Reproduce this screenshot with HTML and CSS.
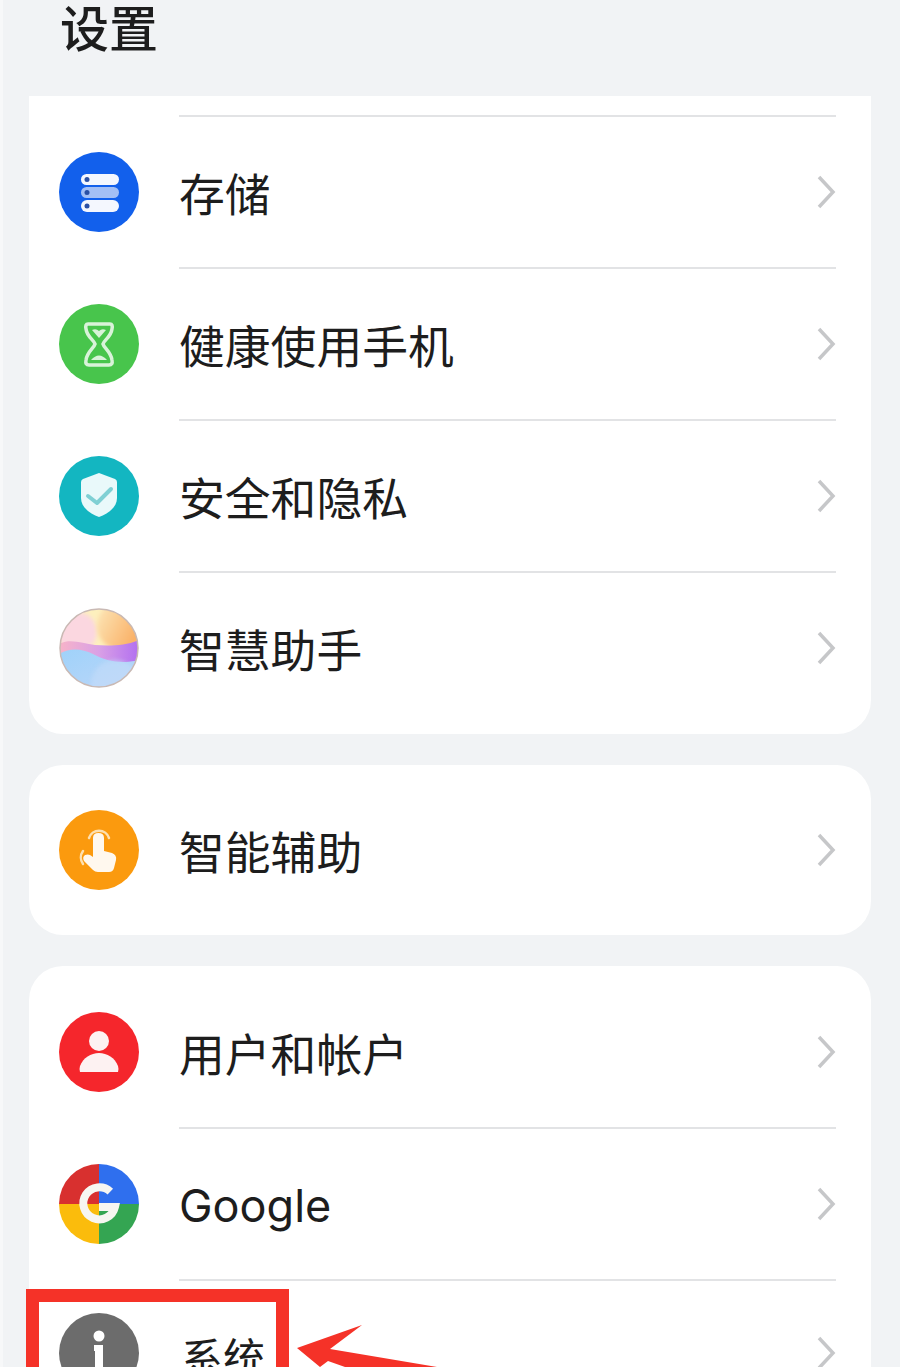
FILE: index.html
```html
<!DOCTYPE html>
<html lang="zh-CN">
<head>
<meta charset="utf-8">
<title>设置</title>
<link rel="stylesheet" href="styles.css">
</head>
<body>
<div class="screen">
  <header class="header"><h1 class="title">设置</h1></header>

  <section class="card card-scrolled">
    <div class="row row-clipped"></div>
    <div class="row">
      <svg class="icon" viewBox="0 0 80 80"><circle cx="40" cy="40" r="40" fill="#1260ec"/><rect x="22" y="22" width="38" height="11" rx="5.5" fill="#f4f7fe"/><rect x="22" y="35" width="38" height="11" rx="5.5" fill="#a3bff5"/><rect x="22" y="48" width="38" height="12" rx="6" fill="#f4f7fe"/><circle cx="28" cy="27.500" r="2.500" fill="#2a50a5"/><circle cx="28" cy="40.500" r="2.500" fill="#2a50a5"/><circle cx="28" cy="54" r="2.500" fill="#2a50a5"/></svg>
      <span class="label">存储</span>
      <svg class="chev" viewBox="0 0 20 36"><path d="M3 3 L17 18 L3 33"/></svg>
    </div>
    <div class="row">
      <svg class="icon" viewBox="0 0 80 80"><circle cx="40" cy="40" r="40" fill="#48c54c"/><path d="M29 20 H51 Q54 20 53 25 C52 33 45 36 44 40 C45 44 52 48 53 56 Q54 61 50 61 H30 Q26 61 27 56 C28 48 35 44 36 40 C35 36 28 33 27 25 Q26 20 29 20 Z" fill="none" stroke="#d9f3d9" stroke-width="3.500"/><path d="M33 26 Q37 24 40 27 Q43 24 47 26 L40 34 Z" fill="#d9f3d9"/><path d="M32 56 Q40 47 48 56 Z" fill="#d9f3d9"/></svg>
      <span class="label">健康使用手机</span>
      <svg class="chev" viewBox="0 0 20 36"><path d="M3 3 L17 18 L3 33"/></svg>
    </div>
    <div class="row">
      <svg class="icon" viewBox="0 0 80 80"><circle cx="40" cy="40" r="40" fill="#13b6c1"/><path d="M40 17 L56 23 Q58 24 58 26 V42 C58 52 48 58 40 61 C32 58 22 52 22 42 V26 Q22 24 24 23 Z" fill="#e9f9fa"/><path d="M29 40 L38 47 L52 33" fill="none" stroke="#7fd0d4" stroke-width="4" stroke-linecap="round" stroke-linejoin="round"/></svg>
      <span class="label">安全和隐私</span>
      <svg class="chev" viewBox="0 0 20 36"><path d="M3 3 L17 18 L3 33"/></svg>
    </div>
    <div class="row">
      <svg class="icon" viewBox="0 0 80 80">
        <defs>
          <clipPath id="orb"><circle cx="40" cy="40" r="39"/></clipPath>
          <filter id="soft" x="-20%" y="-20%" width="140%" height="140%"><feGaussianBlur stdDeviation="2"/></filter>
          <linearGradient id="orbBlob" x1="0" y1="0" x2="1" y2="0.500"><stop offset="0" stop-color="#fde9bc"/><stop offset="1" stop-color="#f9ad62"/></linearGradient>
          <linearGradient id="orbMid" x1="0" y1="0" x2="1" y2="0"><stop offset="0" stop-color="#f8b4c8"/><stop offset="0.500" stop-color="#d9a0e6"/><stop offset="1" stop-color="#b26ff0"/></linearGradient>
          <linearGradient id="orbLow" x1="0" y1="0" x2="1" y2="1"><stop offset="0" stop-color="#9fd2fa"/><stop offset="1" stop-color="#bcd6f8"/></linearGradient>
        </defs>
        <g clip-path="url(#orb)">
          <rect width="80" height="80" fill="#fdf0bd"/>
          <circle cx="18" cy="24" r="20" fill="#fbd7e0" filter="url(#soft)"/>
          <circle cx="62" cy="18" r="24" fill="url(#orbBlob)" filter="url(#soft)"/>
          <path d="M0 36 C12 30 24 36 36 37 C50 38 66 38 80 32 V62 H0 Z" fill="url(#orbMid)"/>
          <path d="M0 46 C10 40 22 40 34 46 C48 54 64 56 80 52 V80 H0 Z" fill="url(#orbLow)"/>
          <circle cx="56" cy="76" r="24" fill="#c5dcf9" opacity="0.600" filter="url(#soft)"/>
        </g>
        <circle cx="40" cy="40" r="39" fill="none" stroke="#c9b9b4" stroke-width="1.500"/>
      </svg>
      <span class="label">智慧助手</span>
      <svg class="chev" viewBox="0 0 20 36"><path d="M3 3 L17 18 L3 33"/></svg>
    </div>
  </section>

  <section class="card">
    <div class="row">
      <svg class="icon" viewBox="0 0 80 80"><circle cx="40" cy="40" r="40" fill="#fb9a0e"/><path d="M34 28 Q34 23 39.500 23 Q45 23 45 28 V41 L53 43 Q58 45 57 50 L55 58 Q54 62 50 62 H39 Q36 62 34 60 L25 51 Q23 47 26 45 Q29 44 31 45 L34 47 Z" fill="#fff8ee"/><path d="M30 28 A10.500 10.500 0 0 1 50 28" fill="none" stroke="#fde0b0" stroke-width="2.500" stroke-linecap="round"/><path d="M24 41 A11 11 0 0 0 24 54" fill="none" stroke="#fde0b0" stroke-width="2.500" stroke-linecap="round"/></svg>
      <span class="label">智能辅助</span>
      <svg class="chev" viewBox="0 0 20 36"><path d="M3 3 L17 18 L3 33"/></svg>
    </div>
  </section>

  <section class="card card-last">
    <div class="row">
      <svg class="icon" viewBox="0 0 80 80"><circle cx="40" cy="40" r="40" fill="#f5262c"/><circle cx="40" cy="29" r="10" fill="#fdf2f2"/><path d="M21 60 Q20 57 21 54 C24 46 32 41 40 41 C48 41 56 46 59 54 Q60 57 59 60 Z" fill="#fdf2f2"/></svg>
      <span class="label">用户和帐户</span>
      <svg class="chev" viewBox="0 0 20 36"><path d="M3 3 L17 18 L3 33"/></svg>
    </div>
    <div class="row">
      <svg class="icon" viewBox="0 0 80 80">
        <path d="M40 40 V0 A40 40 0 0 0 0 40 Z" fill="#d8302f"/>
        <path d="M40 40 V0 A40 40 0 0 1 80 40 Z" fill="#2f6fee"/>
        <path d="M40 40 H80 A40 40 0 0 1 40 80 Z" fill="#34a552"/>
        <path d="M40 40 V80 A40 40 0 0 1 0 40 Z" fill="#fbbc0c"/>
        <path d="M51.300 27.700 A16 16 0 1 0 55.900 43 H40" fill="none" stroke="#f7f6f1" stroke-width="8"/>
      </svg>
      <span class="label label-latin">Google</span>
      <svg class="chev" viewBox="0 0 20 36"><path d="M3 3 L17 18 L3 33"/></svg>
    </div>
    <div class="row row-tail">
      <svg class="icon" viewBox="0 0 80 80"><circle cx="40" cy="40" r="40" fill="#6c6c6c"/><circle cx="40" cy="23" r="5.500" fill="#fff"/><path d="M35 32 H44 V58 H36 V38 H35 Z" fill="#fff"/></svg>
      <span class="label label-tail">系统</span>
      <svg class="chev" viewBox="0 0 20 36"><path d="M3 3 L17 18 L3 33"/></svg>
    </div>
  </section>

  <div class="highlight"></div>
  <svg class="arrow" viewBox="0 0 200 68"><path d="M6 49 L71 26 L39 50 L146 68 L54 68 L37 62 L29 68 Z" fill="#f53228"/></svg>
</div>
</body>
</html>
```

FILE: styles.css
```css
* { box-sizing: border-box; }
html, body { margin: 0; padding: 0; }
body { background: #f1f3f5; font-family: "Noto Sans CJK SC", "Noto Sans", sans-serif; color: #1d1d1d; }
.screen { position: relative; width: 900px; height: 1367px; overflow: hidden; padding: 0 29px 0 26px; border-left: 3px solid #f7f8f9; }
.header { height: 96px; padding-left: 31px; }
.title { margin: 0; font-size: 49px; line-height: 52px; font-weight: 500; }
.card { background: #fff; border-radius: 34px; padding: 10px 0; margin-bottom: 31px; }
.card-scrolled { border-radius: 0 0 34px 34px; padding-top: 0; }
.card-last { margin-bottom: 0; }
.row { display: flex; align-items: center; height: 152px; padding: 0 35px 0 30px; position: relative; }
.card > .row + .row::before { content: ""; position: absolute; top: -1px; left: 150px; right: 35px; height: 2px; background: #e2e3e5; }
.card > .row:only-child { height: 150px; }
.row-clipped { height: 20px; }
.row-tail { height: 146px; }
.icon { width: 80px; height: 80px; flex: none; display: block; }
.label { flex: 1; margin-left: 40px; font-size: 45.8px; line-height: 60px; font-weight: 400; white-space: nowrap; }
.label-latin { font-family: Inter, "Noto Sans", sans-serif; font-size: 45px; padding-top: 4px; }
.label-tail { font-size: 42px; margin-left: 42px; padding-top: 6px; }
.chev { width: 20px; height: 36px; flex: none; fill: none; stroke: #c6c7c9; stroke-width: 3.500px; }
.highlight { position: absolute; left: 23px; top: 1289px; width: 263px; height: 110px; border: 13px solid #f53228; }
.arrow { position: absolute; left: 288px; top: 1299px; width: 200px; height: 68px; }
```
